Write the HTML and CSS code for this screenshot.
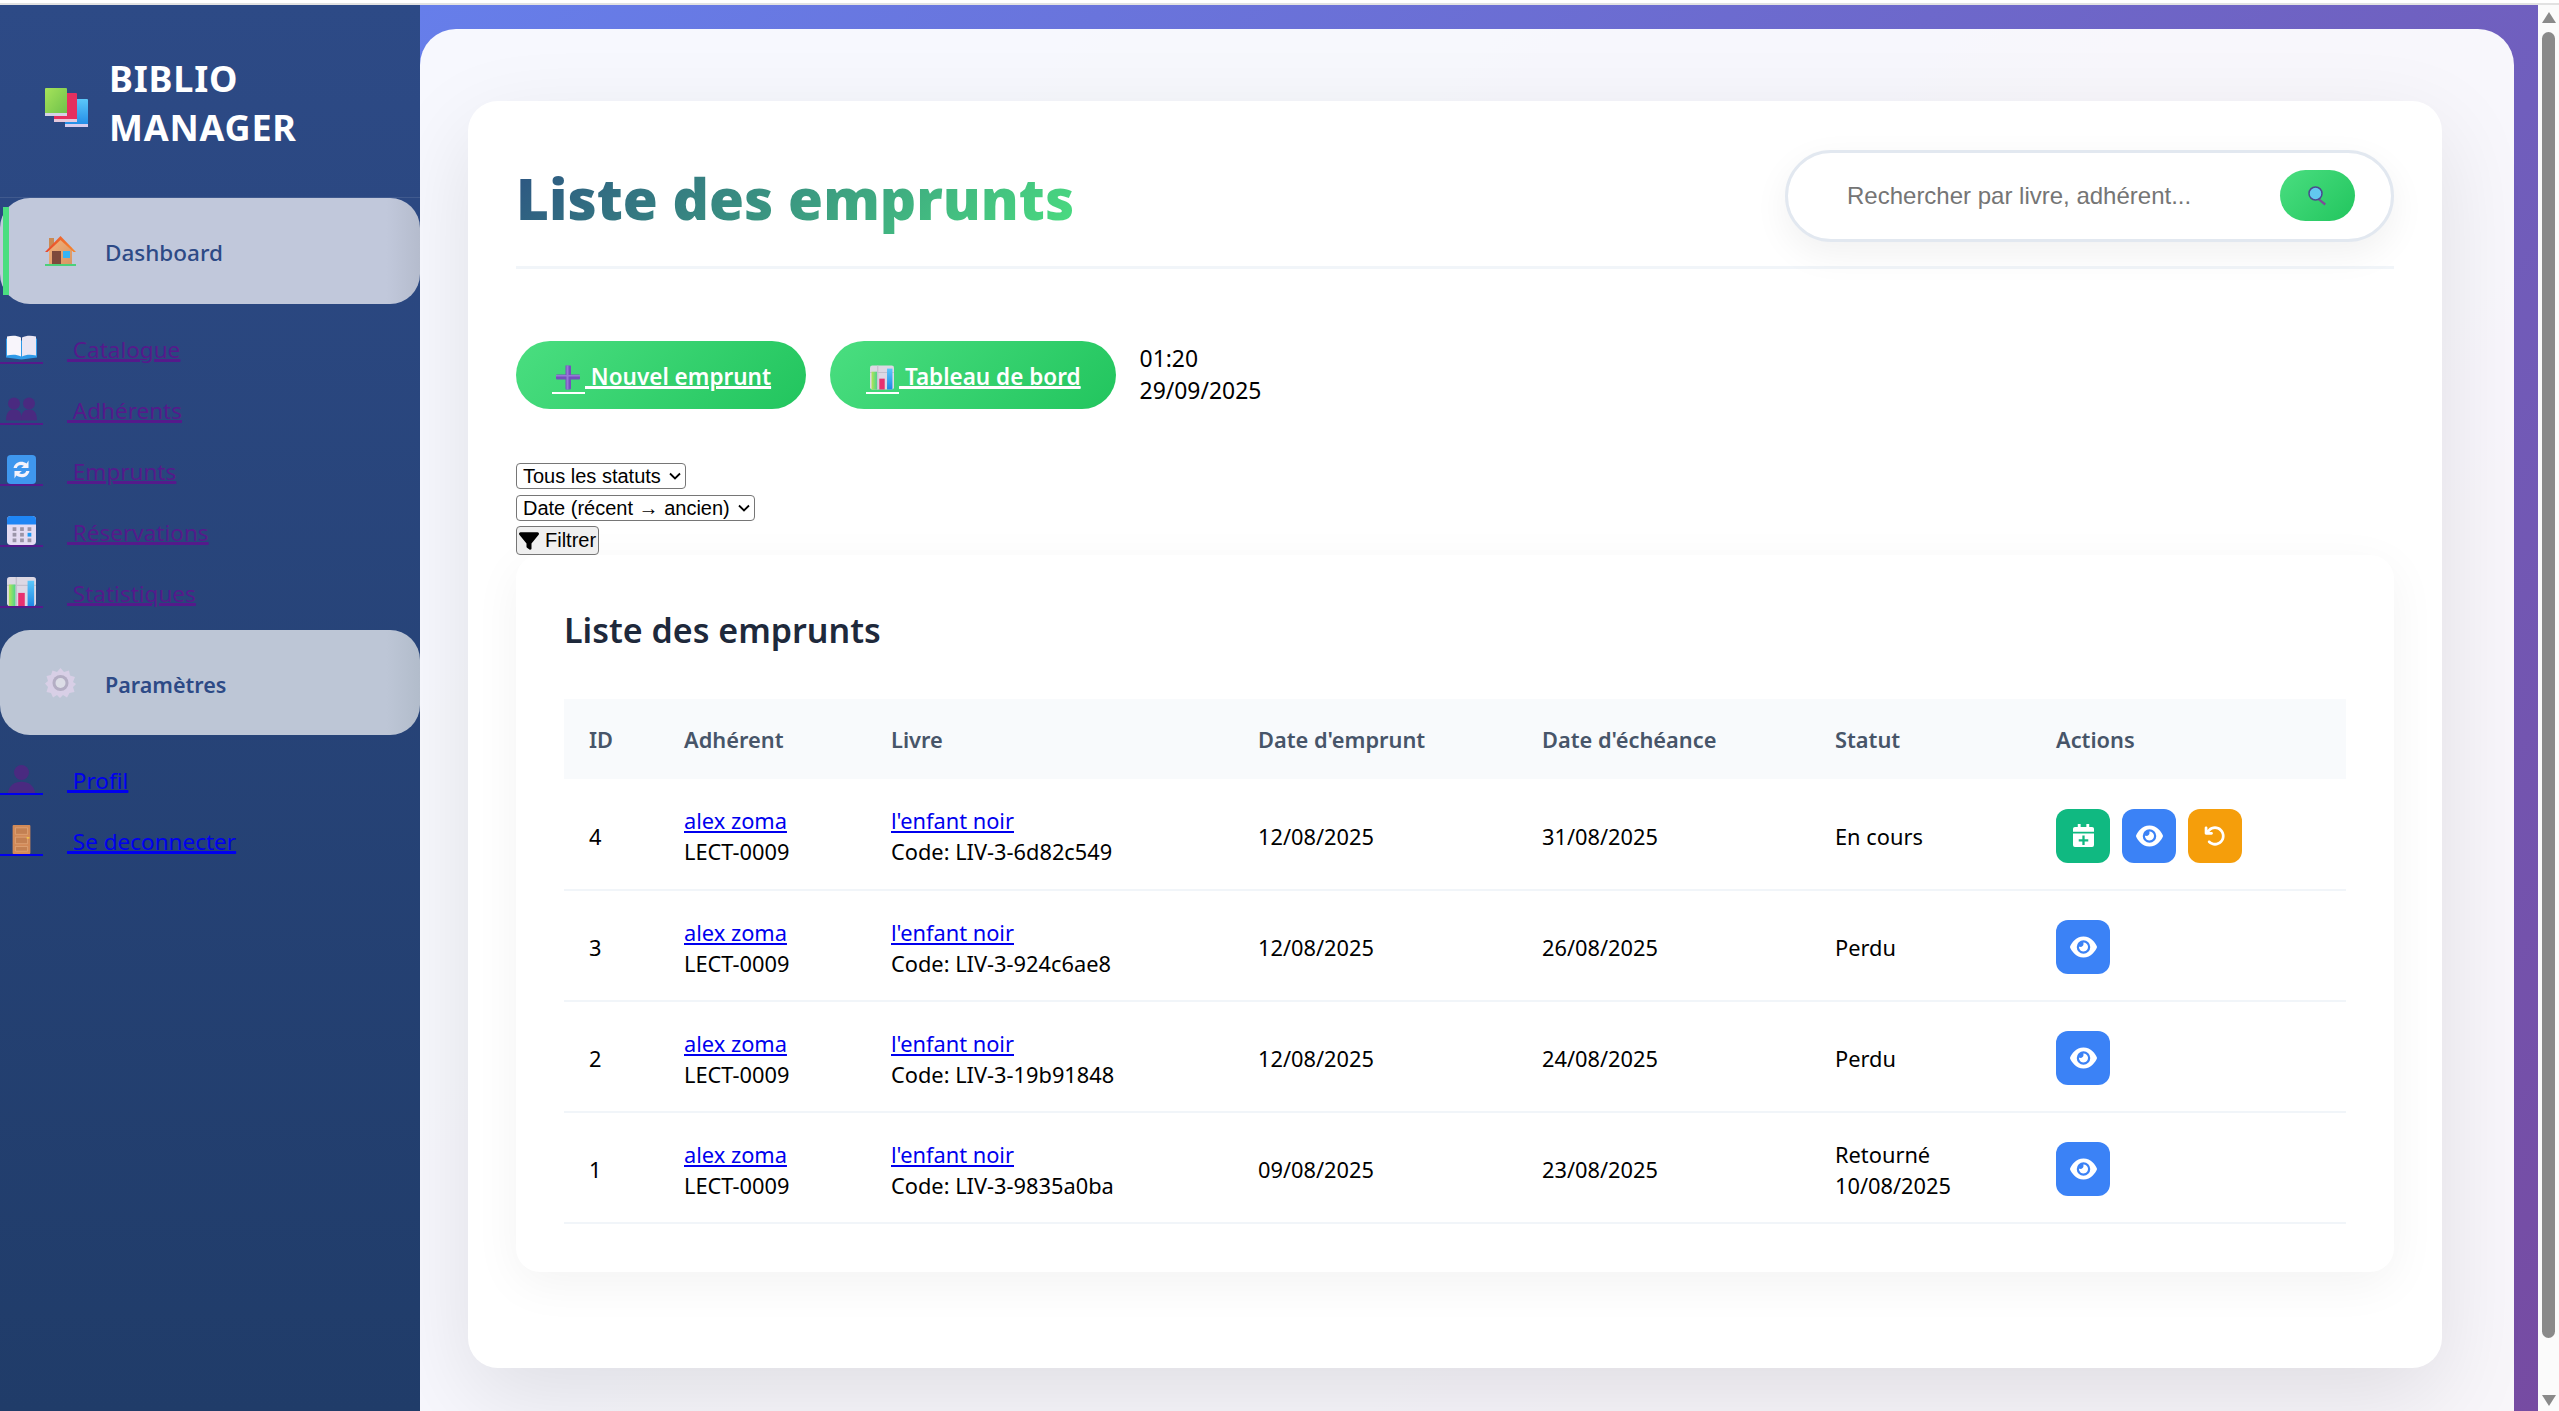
FILE: index.html
```html
<!DOCTYPE html>
<html lang="fr">
<head>
<meta charset="utf-8">
<title>Liste des emprunts</title>
<link rel="stylesheet" href="styles.css">
</head>
<body>
<svg class="sprite" aria-hidden="true">
  <defs>
    <linearGradient id="gGreen" x1="0" y1="0" x2="1" y2="1"><stop offset="0" stop-color="#a6e35a"/><stop offset="1" stop-color="#6cc04a"/></linearGradient>
    <linearGradient id="gBlue" x1="0" y1="0" x2="0" y2="1"><stop offset="0" stop-color="#5cc8fa"/><stop offset="1" stop-color="#1e88e5"/></linearGradient>
    <linearGradient id="gRoof" x1="0" y1="0" x2="1" y2="0"><stop offset="0" stop-color="#e8452c"/><stop offset="1" stop-color="#f58a30"/></linearGradient>
    <linearGradient id="gWall" x1="0" y1="0" x2="1" y2="1"><stop offset="0" stop-color="#f3b27c"/><stop offset="1" stop-color="#d99562"/></linearGradient>
    <linearGradient id="gBar" x1="0" y1="0" x2="1" y2="0"><stop offset="0" stop-color="#b5e655"/><stop offset="1" stop-color="#4fd48a"/></linearGradient>
    <symbol id="i-books" viewBox="0 0 43 40">
      <rect x="20" y="11" width="23" height="28" rx="1" fill="url(#gBlue)"/>
      <rect x="20" y="36" width="23" height="3" fill="#d7cdee"/>
      <rect x="9" y="5" width="23" height="29" rx="1" fill="#e5305f"/>
      <rect x="9" y="31" width="23" height="3" fill="#e6c8dc"/>
      <rect x="0" y="0" width="22" height="28" rx="1" fill="url(#gGreen)"/>
      <rect x="0" y="25" width="22" height="3" fill="#d5d2e6"/>
    </symbol>
    <symbol id="i-house" viewBox="0 0 31 30">
      <rect x="4" y="2" width="5" height="10" fill="#c98a54"/>
      <path d="M4 12 15.500 3 27 12V28H4Z" fill="url(#gWall)"/>
      <path d="M0 16 15.500 0 31 16 28.500 16 15.500 4 2.500 16Z" fill="url(#gRoof)"/>
      <rect x="7" y="15" width="9" height="13" fill="#7e4a3c"/>
      <rect x="18" y="15" width="7" height="7" fill="#35b4f4"/>
      <rect x="0" y="28" width="31" height="2" fill="#4bd07a"/>
    </symbol>
    <symbol id="i-book" viewBox="0 0 31 24">
      <path d="M0 3 15.500 5 31 3V22L15.500 24 0 22Z" fill="#2f9ae8"/>
      <path d="M1 1C6 0 11 0 15 2V21C11 19 6 19 1 20Z" fill="#f8f5fb"/>
      <path d="M30 1C25 0 20 0 16 2V21C20 19 25 19 30 20Z" fill="#ebe6f3"/>
    </symbol>
    <symbol id="i-people" viewBox="0 0 31 24">
      <circle cx="8" cy="7" r="6"/><path d="M0 24C0 16 3 13 8 13S16 16 16 24Z"/>
      <circle cx="23" cy="7" r="6"/><path d="M15 24C15 16 18 13 23 13S31 16 31 24Z"/>
    </symbol>
    <symbol id="i-sync" viewBox="0 0 31 31">
      <rect width="31" height="31" rx="4" fill="#3f97ee"/>
      <path d="M7 14C8 8 15 5 21 9L23 6V14H15L18 11.500C15 10 11 11 10.500 14ZM24 17C23 23 16 26 10 22L8 25V17H16L13 19.500C16 21 20 20 20.500 17Z" fill="#f6f3fb"/>
    </symbol>
    <symbol id="i-cal" viewBox="0 0 31 31">
      <rect width="31" height="31" rx="4" fill="#e4dcf2"/>
      <path d="M0 9V4Q0 0 4 0H27Q31 0 31 4V9Z" fill="#1f86f5"/>
      <g fill="#9b95a8"><rect x="6" y="12" width="4" height="4"/><rect x="14" y="12" width="4" height="4"/><rect x="22" y="12" width="4" height="4"/><rect x="6" y="18" width="4" height="4"/><rect x="14" y="18" width="4" height="4"/><rect x="6" y="24" width="4" height="4"/><rect x="14" y="24" width="4" height="4"/><rect x="22" y="24" width="4" height="4"/></g>
      <rect x="22" y="18" width="4" height="4" fill="#1f9bf5"/>
    </symbol>
    <symbol id="i-chart" viewBox="0 0 31 31">
      <rect width="31" height="31" rx="3" fill="#dcd8e4"/>
      <path d="M10 0V31M0 9H31" stroke="#c4c0cd" stroke-width="1.500"/>
      <rect x="2" y="8" width="7" height="23" fill="url(#gBar)"/>
      <rect x="12" y="17" width="7" height="14" fill="#e8306f"/>
      <rect x="22" y="4" width="7" height="27" fill="url(#gBlue)"/>
    </symbol>
    <symbol id="i-gear" viewBox="0 0 31 30">
      <path d="M15.500 0 19 4 24 2.500 25 7.500 30 9 28 14 31 16 28 19 29.500 24 24.500 25 22 29.500 18 27 15 30 12 27 8 29.500 6 25 1.500 24 3 19 0 15.500 3 13 1.500 8 6 7 7.500 2.500 12 4Z" fill="#d8cfe6"/>
      <circle cx="15.500" cy="15" r="8" fill="#b4aec4"/><circle cx="15.500" cy="15" r="5" fill="#dcdde6"/>
    </symbol>
    <symbol id="i-person" viewBox="0 0 31 31">
      <circle cx="15.500" cy="9" r="8"/><path d="M1 31C2 23 8 19 15.500 19S29 23 30 31Z"/>
    </symbol>
    <symbol id="i-door" viewBox="0 0 31 31">
      <rect x="6" y="0" width="19" height="31" rx="1" fill="#d28a58"/>
      <path d="M9 3H22V10H9ZM9 13H22V20H9ZM9 23H22V28H9Z" fill="#c38052" stroke="#e2a87a" stroke-width=".8"/>
      <rect x="21" y="13" width="3" height="1.500" fill="#f7c948"/>
    </symbol>
    <symbol id="i-plus" viewBox="0 0 24 24">
      <path d="M9.500 0H14.500Q15 0 15 1V9H23Q24 9 24 10V13Q24 14 23 14H15V23Q15 24 14 24H10Q9.500 24 9.500 23V14H1Q0 14 0 13V10Q0 9 1 9H9.500V1Q9.500 0 9.500 0Z" fill="#7450bd"/>
      <path d="M10.500 0H12.500V24H10.500ZM0 9.500H24V11H0Z" fill="#9678d6"/>
    </symbol>
    <symbol id="i-search" viewBox="0 0 20 20">
      <path d="M11.500 12.500 18 17.500 16.500 19.500 10 14Z" fill="#7d4d97"/>
      <circle cx="7.500" cy="7.500" r="6.500" fill="#62c8ef" stroke="#4a4a8f" stroke-width="1.500"/>
    </symbol>
    <symbol id="i-filter" viewBox="0 0 512 512">
      <path d="M3.900 54.900C10.500 40.900 24.500 32 40 32H472c15.500 0 29.500 8.900 36.100 22.900s4.600 30.500-5.200 42.500L320 320.900V448c0 12.100-6.800 23.200-17.700 28.600s-23.800 4.300-33.500-3l-64-48c-8.100-6-12.800-15.500-12.800-25.600V320.900L9 97.300C-.7 85.400-2.800 68.800 3.900 54.900z"/>
    </symbol>
    <symbol id="i-eye" viewBox="0 0 576 512">
      <path d="M288 32c-80.800 0-145.500 36.800-192.600 80.600C48.600 156 17.300 208 2.500 243.700c-3.300 7.900-3.300 16.700 0 24.600C17.300 304 48.600 356 95.400 399.400C142.500 443.200 207.200 480 288 480s145.500-36.800 192.600-80.600c46.800-43.500 78.100-95.400 93-131.100c3.300-7.900 3.300-16.700 0-24.600c-14.900-35.700-46.200-87.700-93-131.100C433.500 68.800 368.800 32 288 32zM144 256a144 144 0 1 1 288 0 144 144 0 1 1 -288 0zm144-64c0 35.300-28.700 64-64 64c-7.100 0-13.900-1.200-20.300-3.300c-5.500-1.800-11.900 1.600-11.700 7.400c.3 6.900 1.300 13.800 3.200 20.700c13.700 51.200 66.400 81.600 117.600 67.900s81.600-66.400 67.900-117.600c-11.100-41.500-47.800-69.400-88.600-71.100c-5.800-.2-9.200 6.100-7.400 11.700c2.100 6.400 3.300 13.200 3.300 20.300z"/>
    </symbol>
    <symbol id="i-undo" viewBox="0 0 512 512">
      <path d="M125.700 160H176c17.700 0 32 14.300 32 32s-14.300 32-32 32H48c-17.700 0-32-14.300-32-32V64c0-17.700 14.300-32 32-32s32 14.300 32 32v51.200L97.600 97.600c87.500-87.500 229.300-87.500 316.800 0s87.500 229.300 0 316.800s-229.300 87.500-316.800 0c-12.500-12.500-12.500-32.800 0-45.300s32.800-12.500 45.300 0c62.500 62.500 163.800 62.500 226.300 0s62.500-163.800 0-226.300s-163.800-62.500-226.300 0L125.700 160z"/>
    </symbol>
    <symbol id="i-calplus" viewBox="0 0 22 24">
      <path d="M5 0H8V3H14V0H17V3H20Q22 3 22 5V8H0V5Q0 3 2 3H5ZM0 10H22V22Q22 24 20 24H2Q0 24 0 22ZM9.800 12V15.800H6V18.200H9.800V22H12.200V18.200H16V15.800H12.200V12Z" fill-rule="evenodd"/>
    </symbol>
  </defs>
</svg>

<div class="topstrip"></div>
<div class="frame">
  <aside class="sidebar">
    <div class="brand">
      <svg class="brand-icon"><use href="#i-books"/></svg>
      <div class="brand-name">BIBLIO<br>MANAGER</div>
    </div>
    <nav class="nav">
      <div class="pill pill-active">
        <svg class="pill-icon"><use href="#i-house"/></svg>
        <span class="pill-label">Dashboard</span>
      </div>
      <a class="navlink visited first" href="#"><span class="navicon"><svg class="navsvg"><use href="#i-book"/></svg></span><span class="navtext">&nbsp;Catalogue</span></a>
      <a class="navlink visited" href="#"><span class="navicon"><svg class="navsvg"><use href="#i-people"/></svg></span><span class="navtext">&nbsp;Adhérents</span></a>
      <a class="navlink visited" href="#"><span class="navicon"><svg class="navsvg"><use href="#i-sync"/></svg></span><span class="navtext">&nbsp;Emprunts</span></a>
      <a class="navlink visited" href="#"><span class="navicon"><svg class="navsvg"><use href="#i-cal"/></svg></span><span class="navtext">&nbsp;Réservations</span></a>
      <a class="navlink visited" href="#"><span class="navicon"><svg class="navsvg"><use href="#i-chart"/></svg></span><span class="navtext">&nbsp;Statistiques</span></a>
      <div class="pill pill-plain">
        <svg class="pill-icon"><use href="#i-gear"/></svg>
        <span class="pill-label">Paramètres</span>
      </div>
      <a class="navlink first" href="#"><span class="navicon"><svg class="navsvg"><use href="#i-person"/></svg></span><span class="navtext">&nbsp;Profil</span></a>
      <a class="navlink" href="#"><span class="navicon"><svg class="navsvg"><use href="#i-door"/></svg></span><span class="navtext">&nbsp;Se deconnecter</span></a>
    </nav>
  </aside>

  <div class="stage">
    <main class="panel">
      <div class="card">
        <header class="head">
          <h1 class="title">Liste des emprunts</h1>
          <form class="search">
            <input class="search-input" type="text" placeholder="Rechercher par livre, adhérent...">
            <button class="search-btn" type="button" aria-label="Rechercher"><svg class="search-icon"><use href="#i-search"/></svg></button>
          </form>
        </header>

        <div class="actions">
          <a class="cta" href="#"><span class="cta-icon"><svg class="cta-svg"><use href="#i-plus"/></svg></span><span class="cta-text">&nbsp;Nouvel emprunt</span></a>
          <a class="cta" href="#"><span class="cta-icon"><svg class="cta-svg"><use href="#i-chart"/></svg></span><span class="cta-text">&nbsp;Tableau de bord</span></a>
          <div class="clock">01:20<br>29/09/2025</div>
        </div>

        <form class="filters">
          <select class="sel sel-status"><option>Tous les statuts</option></select>
          <select class="sel sel-date"><option>Date (récent → ancien)</option></select>
          <button class="filter-btn" type="button"><svg class="filter-icon"><use href="#i-filter"/></svg> Filtrer</button>
        </form>

        <section class="table-card">
          <h2 class="table-title">Liste des emprunts</h2>
          <table class="table">
            <colgroup>
              <col class="c-id"><col class="c-ad"><col class="c-li"><col class="c-de"><col class="c-dc"><col class="c-st"><col class="c-ac">
            </colgroup>
            <thead>
              <tr><th>ID</th><th>Adhérent</th><th>Livre</th><th>Date d'emprunt</th><th>Date d'échéance</th><th>Statut</th><th>Actions</th></tr>
            </thead>
            <tbody>
              <tr>
                <td>4</td>
                <td><a href="#">alex zoma</a><br>LECT-0009</td>
                <td><a href="#">l'enfant noir</a><br>Code: LIV-3-6d82c549</td>
                <td>12/08/2025</td><td>31/08/2025</td><td>En cours</td>
                <td><div class="row-actions">
                  <button class="act act-green" type="button" aria-label="Prolonger"><svg class="ic-cal"><use href="#i-calplus"/></svg></button>
                  <button class="act act-blue" type="button" aria-label="Voir"><svg class="ic-eye"><use href="#i-eye"/></svg></button>
                  <button class="act act-orange" type="button" aria-label="Retour"><svg class="ic-undo"><use href="#i-undo"/></svg></button>
                </div></td>
              </tr>
              <tr>
                <td>3</td>
                <td><a href="#">alex zoma</a><br>LECT-0009</td>
                <td><a href="#">l'enfant noir</a><br>Code: LIV-3-924c6ae8</td>
                <td>12/08/2025</td><td>26/08/2025</td><td>Perdu</td>
                <td><div class="row-actions"><button class="act act-blue" type="button" aria-label="Voir"><svg class="ic-eye"><use href="#i-eye"/></svg></button></div></td>
              </tr>
              <tr>
                <td>2</td>
                <td><a href="#">alex zoma</a><br>LECT-0009</td>
                <td><a href="#">l'enfant noir</a><br>Code: LIV-3-19b91848</td>
                <td>12/08/2025</td><td>24/08/2025</td><td>Perdu</td>
                <td><div class="row-actions"><button class="act act-blue" type="button" aria-label="Voir"><svg class="ic-eye"><use href="#i-eye"/></svg></button></div></td>
              </tr>
              <tr>
                <td>1</td>
                <td><a href="#">alex zoma</a><br>LECT-0009</td>
                <td><a href="#">l'enfant noir</a><br>Code: LIV-3-9835a0ba</td>
                <td>09/08/2025</td><td>23/08/2025</td><td>Retourné<br>10/08/2025</td>
                <td><div class="row-actions"><button class="act act-blue" type="button" aria-label="Voir"><svg class="ic-eye"><use href="#i-eye"/></svg></button></div></td>
              </tr>
            </tbody>
          </table>
        </section>
      </div>
    </main>
  </div>

  <div class="scrollbar" aria-hidden="true">
    <div class="arrow-up"></div>
    <div class="thumb"></div>
    <div class="arrow-down"></div>
  </div>
</div>
</body>
</html>
```

FILE: styles.css
```css
* { box-sizing: border-box; }
html, body { margin: 0; height: 100%; overflow: hidden; }
body { background: #fff; font-family: "Noto Sans", "Open Sans", sans-serif; color: #000; display: flex; flex-direction: column; }
.sprite { position: absolute; width: 0; height: 0; overflow: hidden; }

.topstrip { height: 5px; flex: none; background: linear-gradient(#fff 0 3px, #e2e2e2 3px); }
.frame { flex: 1; min-height: 0; display: flex; }

/* Sidebar */
.sidebar { width: 420px; flex: none; background: linear-gradient(180deg, #2d4a86 0%, #203c69 100%); display: flex; flex-direction: column; }
.brand { height: 193px; display: flex; align-items: center; gap: 21px; padding: 0 0 0 45px; border-bottom: 1px solid rgba(255,255,255,.1); flex: none; }
.brand-icon { width: 43px; height: 40px; margin-top: 13px; flex: none; }
.brand-name { color: #fff; font-size: 36px; font-weight: 700; line-height: 49px; letter-spacing: .8px; padding-top: 3px; }
.nav { display: flex; flex-direction: column; }
.pill { display: flex; align-items: center; gap: 30px; padding-left: 45px; border-radius: 30px; color: #2d4a86; font-size: 22.500px; font-weight: 500; position: relative; }
.pill-label { padding-top: 2px; margin-left: -1px; }
.pill-active { height: 106px; background: linear-gradient(90deg, #c1c8db 92%, #b5bccd); }
.pill-active::before { content: ""; position: absolute; left: 3px; top: 9px; bottom: 9px; width: 6px; background: #4ade80; }
.pill-plain { height: 105px; margin-top: 6px; background: linear-gradient(90deg, #bdc6d6 92%, #b2bccb); font-weight: 600; font-size: 21.500px; }
.pill-plain .pill-label { padding-top: 3px; }
.pill-icon { width: 31px; height: 30px; flex: none; }
.navlink { height: 61px; display: flex; align-items: center; color: #0000ee; font-size: 22.500px; }
.navlink.visited { color: #551a8b; }
.navlink.first { margin-top: 15px; }
.navicon { width: 43px; height: 31px; padding-left: 6px; border-bottom: 2px solid currentColor; flex: none; display: block; margin-right: 24px; margin-top: -2px; }
.navsvg { width: 31px; height: 29px; display: block; fill: #4a2a80; }
.navtext { text-decoration: underline; text-decoration-thickness: 2px; }

/* Main */
.stage { flex: 1; min-width: 0; background: linear-gradient(135deg, #667eea 0%, #764ba2 100%); padding: 24px 24px 0 0; overflow: hidden; }
.panel { height: 1500px; border-radius: 36px 36px 0 0; background: rgba(255,255,255,.95); padding: 72px 72px 0 48px; }
.card { height: 1267px; background: #fff; border-radius: 30px; box-shadow: 0 30px 90px rgba(0,0,0,.1); padding: 48px; }
.head { display: flex; justify-content: space-between; align-items: center; padding-bottom: 24px; border-bottom: 3px solid #f1f5f9; height: 120px; }
.title { margin: 0; font-size: 56.700px; font-weight: 900; line-height: 80px; padding-top: 5px; background: linear-gradient(135deg, #2c5282, #4ade80); -webkit-background-clip: text; background-clip: text; color: transparent; }
.search { width: 609px; height: 92px; border: 3px solid #e2e8f0; border-radius: 46px; display: flex; align-items: center; justify-content: space-between; padding: 0 36px 0 59px; background: #fff; box-shadow: 0 12px 36px rgba(0,0,0,.06); }
.search-input { border: 0; outline: 0; font-family: "Liberation Sans", Arial, sans-serif; font-size: 24px; width: 400px; background: transparent; padding: 0; margin-top: 1px; }
.search-input::placeholder { color: #757575; opacity: 1; }
.search-btn { width: 75px; height: 51px; border: 0; border-radius: 26px; background: linear-gradient(135deg, #4ade80, #22c55e); display: flex; align-items: center; justify-content: center; padding: 0; }
.search-icon { width: 20px; height: 20px; }

.actions { display: flex; gap: 24px; margin-top: 72px; align-items: flex-start; }
.cta { height: 68px; border-radius: 34px; padding: 0 36px; display: flex; align-items: center; color: #fff; font-size: 22.500px; font-weight: 600; background: linear-gradient(135deg, #4ade80, #22c55e); }
.cta-icon { width: 33px; height: 31px; padding: 2px 0 0 4px; border-bottom: 2px solid #fff; display: block; flex: none; margin-top: 7px; }
.cta-svg { width: 24px; height: 25px; display: block; }
.cta-text { text-decoration: underline; text-decoration-thickness: 2px; margin-right: -1px; padding-top: 3px; }
.clock { font-size: 22.900px; line-height: 32px; padding-top: 2px; }

.filters { margin-top: 54px; height: 92px; display: flex; flex-direction: column; align-items: flex-start; gap: 6px; }
.sel { appearance: none; -webkit-appearance: none; font-family: "Liberation Sans", Arial, sans-serif; font-size: 20px; height: 26px; padding: 0 0 0 6px; border: 1px solid #767676; border-radius: 4px; color: #000; background: #fff url("data:image/svg+xml,%3Csvg xmlns='http://www.w3.org/2000/svg' viewBox='0 0 12 8'%3E%3Cpath d='M1 1.500 6 6.500 11 1.500' fill='none' stroke='%23000' stroke-width='1.800'/%3E%3C/svg%3E") no-repeat right 4px center / 12px 8px; }
.sel-status { width: 170px; }
.sel-date { width: 239px; }
.filter-btn { font-family: "Liberation Sans", Arial, sans-serif; font-size: 20px; height: 29px; width: 83px; padding: 0 2px; border: 1px solid #767676; border-radius: 4px; background: #efefef; color: #000; display: flex; align-items: center; gap: 6px; white-space: nowrap; margin-top: -1px; }
.filter-icon { width: 20px; height: 20px; flex: none; }

.table-card { background: #fff; border-radius: 24px; padding: 48px; height: 717px; box-shadow: 0 12px 48px rgba(0,0,0,.05); }
.table-title { margin: 2px 0 44px; font-size: 34px; font-weight: 600; line-height: 50px; color: #1e293b; }
.table { width: 1782px; border-collapse: collapse; table-layout: fixed; font-size: 21.800px; }
.c-id { width: 95px; } .c-ad { width: 207px; } .c-li { width: 367px; } .c-de { width: 284px; } .c-dc { width: 293px; } .c-st { width: 221px; } .c-ac { width: 315px; }
.table th { height: 80px; background: #f8fafc; text-align: left; padding: 0 0 0 25px; font-weight: 600; color: #475569; }
.table td { height: 111px; padding: 4px 0 0 25px; border-bottom: 2px solid #f1f5f9; line-height: 31px; white-space: nowrap; }
.table a { color: #0000ee; }
.row-actions { display: flex; gap: 12px; margin-top: -1px; }
.act { width: 54px; height: 54px; border: 0; border-radius: 12px; display: flex; align-items: center; justify-content: center; padding: 0; fill: #fff; }
.act-green { background: #10b981; }
.act-blue { background: #3b82f6; }
.act-orange { background: #f59e0b; }
.ic-cal { width: 21px; height: 23px; }
.ic-eye { width: 27px; height: 24px; }
.ic-undo { width: 22px; height: 22px; }

/* Scrollbar */
.scrollbar { width: 21px; flex: none; background: #fbfbfb; display: flex; flex-direction: column; align-items: center; padding: 7px 0 5px; }
.arrow-up { width: 0; height: 0; border-left: 7px solid transparent; border-right: 7px solid transparent; border-bottom: 11px solid #8a8a8a; }
.thumb { width: 13px; height: 1306px; margin-top: 9px; border-radius: 7px; background: #8a8a8a; }
.arrow-down { width: 0; height: 0; border-left: 7px solid transparent; border-right: 7px solid transparent; border-top: 11px solid #8a8a8a; margin-top: auto; }
```
